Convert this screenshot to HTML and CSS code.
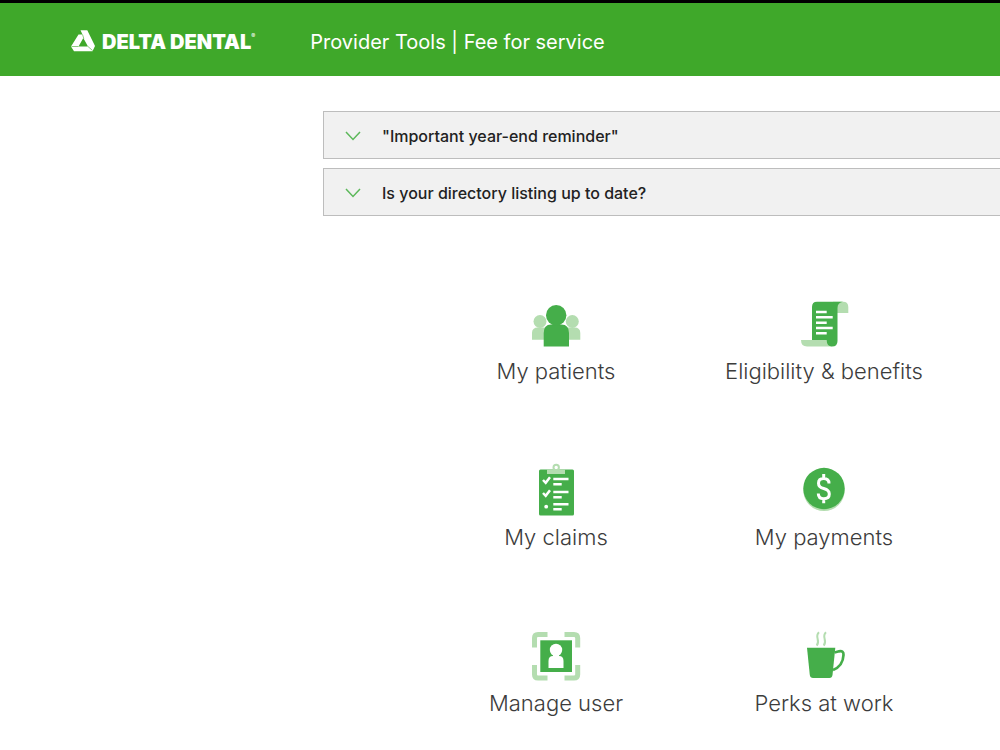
FILE: index.html
```html
<!DOCTYPE html>
<html lang="en">
<head>
<meta charset="utf-8">
<meta name="viewport" content="width=device-width, initial-scale=1">
<title>Delta Dental Provider Tools</title>
<link rel="stylesheet" href="styles.css">
</head>
<body>
<header class="header">
  <a class="brand" href="#">
    <svg class="brand-mark" viewBox="0 1 26 24" aria-hidden="true">
      <path fill="#fff" fill-rule="evenodd" d="M10.500 1.300H17.300L25 17L22.500 22.300H4L1 17.500L8.500 5.500H12.500ZM13.300 9L8.500 17.500H18Z"/>
      <path fill="none" stroke="#3fa82a" stroke-width="0.600" d="M12.500 5.500L13.800 9.500M1.500 17.500H8.500M18 17.500L22.500 21.500"/>
    </svg>
    <span class="brand-name">DELTA DENTAL</span><span class="brand-reg">®</span>
  </a>
  <span class="header-title">Provider Tools | Fee for service</span>
</header>
<main class="main">
  <section class="notices">
    <button class="notice" type="button" aria-expanded="false">
      <svg class="chevron" viewBox="0 0 16 10" aria-hidden="true"><path d="M1 1L8 8.500L15 1"/></svg>
      <span>"Important year-end reminder"</span>
    </button>
    <button class="notice" type="button" aria-expanded="false">
      <svg class="chevron" viewBox="0 0 16 10" aria-hidden="true"><path d="M1 1L8 8.500L15 1"/></svg>
      <span>Is your directory listing up to date?</span>
    </button>
  </section>
  <nav class="tools">
    <a class="tool" href="#">
      <svg class="tool-icon" viewBox="0 0 54 54" aria-hidden="true">
        <g class="pale"><circle cx="11" cy="24.500" r="6.500"/><circle cx="43.300" cy="24.500" r="6.500"/><path d="M3 42.700V36Q3 30.500 9 30.500H18V42.700ZM51.300 42.700V36Q51.300 30.500 45.500 30.500H36V42.700Z"/></g>
        <path class="solid" d="M14.700 49.500V36Q14.700 27.500 22 27.500H32.500Q40 27.500 40 36V49.500Z"/>
        <circle class="solid" cx="27.200" cy="18.300" r="10.200"/>
      </svg>
      <span>My patients</span>
    </a>
    <a class="tool" href="#">
      <svg class="tool-icon" viewBox="0 0 54 54" aria-hidden="true">
        <path class="pale" d="M36 4.700H46Q51.300 4.700 51.300 10V16H40ZM4 43H31L35 49.500H10Q4 49.500 4 43Z"/>
        <path class="solid" d="M20 4.700H46Q40.500 5.500 40.500 11V44Q40.500 49.500 35 49.500Q29.700 49.500 29.700 43H15V10Q15 4.700 20 4.700Z"/>
        <path class="lines" d="M19 15H29.700M19 20.300H35.700M19 25.700H29.700M19 31H35.700M19 36.300H29.700"/>
      </svg>
      <span>Eligibility &amp; benefits</span>
    </a>
    <a class="tool" href="#">
      <svg class="tool-icon" viewBox="0 0 54 54" aria-hidden="true">
        <rect class="solid" x="10" y="6.500" width="35" height="46" rx="1.500"/>
        <path class="pale" d="M18 6.500H36V11H18Z"/><circle class="pale-line" cx="27.200" cy="4.500" r="2.700"/>
        <path class="lines" d="M24.300 16H39.500M24.300 21.300H32.700M24.300 29H39.500M24.300 34.200H32.700M24.300 41.300H39.500M24.300 46.300H32.700"/>
        <path class="lines" d="M14 17L16.700 19.800L21 14.200M14 30L16.700 32.800L21 27.200"/><circle cx="17.200" cy="43.700" r="1.900" fill="#fff"/>
      </svg>
      <span>My claims</span>
    </a>
    <a class="tool" href="#">
      <svg class="tool-icon" viewBox="0 0 54 54" aria-hidden="true">
        <circle class="pale" cx="27" cy="27.300" r="20.700"/><circle class="solid" cx="27" cy="25.500" r="20.700"/>
        <path fill="none" stroke="#fff" stroke-width="3" d="M32 20.500Q32 15.500 26.700 15.500Q21.500 15.500 21.500 20.200Q21.500 24.200 26.700 25.500Q32.300 27 32.300 31Q32.300 35.700 26.700 35.700Q21.300 35.700 21.300 30.500M26.700 11V16M26.700 35V40.300"/>
      </svg>
      <span>My payments</span>
    </a>
    <a class="tool" href="#">
      <svg class="tool-icon" viewBox="0 0 54 54" aria-hidden="true">
        <path fill="none" stroke="#b4ddb0" stroke-width="5" d="M18.500 5.500H9Q5.500 5.500 5.500 9V18.500M35.500 5.500H45Q48.700 5.500 48.700 9V18.500M5.500 36V45.500Q5.500 49 9 49H18.500M48.700 36V45.500Q48.700 49 45 49H35.500"/>
        <rect class="solid" x="11.300" y="11.300" width="31.700" height="31.700"/>
        <g fill="#fff"><circle cx="27" cy="21" r="6.200"/><path d="M19.500 39V32Q19.500 27 24 27V24H30V27Q34.500 27 34.500 32V39Z"/></g>
      </svg>
      <span>Manage user</span>
    </a>
    <a class="tool" href="#">
      <svg class="tool-icon" viewBox="0 0 54 54" aria-hidden="true">
        <path fill="none" stroke="#b4ddb0" stroke-width="2" d="M22 3.300C17 8 24 11 19.700 16.700M29 3.300C24 8 31 11 26.700 16.700"/>
        <path class="solid" d="M10 18.700H38.300L35.500 46Q35 49 32.500 49H16Q13.200 49 12.800 46Z"/>
        <path fill="none" stroke="#45ae4a" stroke-width="2.700" d="M37.500 23.500L42 22.300Q46.800 21.500 46.500 26Q46 37 36 41"/>
      </svg>
      <span>Perks at work</span>
    </a>
  </nav>
</main>
</body>
</html>
```
FILE: styles.css
```css
* { box-sizing: border-box; }

body {
  margin: 0;
  background: #fff;
  color: #3c3c3c;
  font-family: Inter, "Open Sans", sans-serif;
}

.header {
  display: flex;
  align-items: center;
  gap: 55px;
  height: 76px;
  padding: 4px 0 0 70px;
  border-top: 3px solid #000;
  background: #3fa82a;
  color: #fff;
}

.brand {
  display: flex;
  align-items: center;
  color: #fff;
  text-decoration: none;
}

.brand-mark { width: 26px; height: 24px; margin-right: 6px; }
.brand-name { font-size: 20px; font-weight: 900; line-height: 24px; }
.brand-reg { align-self: flex-start; font-size: 6px; line-height: 12px; }
.header-title { font-size: 20px; font-weight: 400; line-height: 24px; }

.main { padding: 35px 0 32px 323px; }

.notices {
  display: flex;
  flex-direction: column;
  gap: 9px;
}

.notice {
  display: flex;
  align-items: center;
  gap: 21px;
  width: 100%;
  height: 48px;
  padding: 2px 21px 0;
  border: 1px solid #bdbdbd;
  border-right: 0;
  background: #f1f1f1;
  color: #222;
  font-family: inherit;
  font-size: 16px;
  font-weight: 500;
  text-align: left;
}

.chevron {
  width: 16px;
  height: 10px;
  fill: none;
  stroke: #5cb85a;
  stroke-width: 1.500;
}

.tools {
  display: grid;
  grid-template-columns: repeat(2, 268px);
  row-gap: 78px;
  padding: 81px 0 0 99px;
}

.tool {
  display: flex;
  flex-direction: column;
  align-items: center;
  gap: 6px;
  color: inherit;
  font-size: 22px;
  font-weight: 300;
  line-height: 28px;
  text-decoration: none;
}

.tool-icon { width: 54px; height: 54px; }
.solid { fill: #45ae4a; }
.pale { fill: #b4ddb0; }
.pale-line { fill: none; stroke: #b4ddb0; stroke-width: 2; }
.lines { fill: none; stroke: #fff; stroke-width: 2.500; }
```
